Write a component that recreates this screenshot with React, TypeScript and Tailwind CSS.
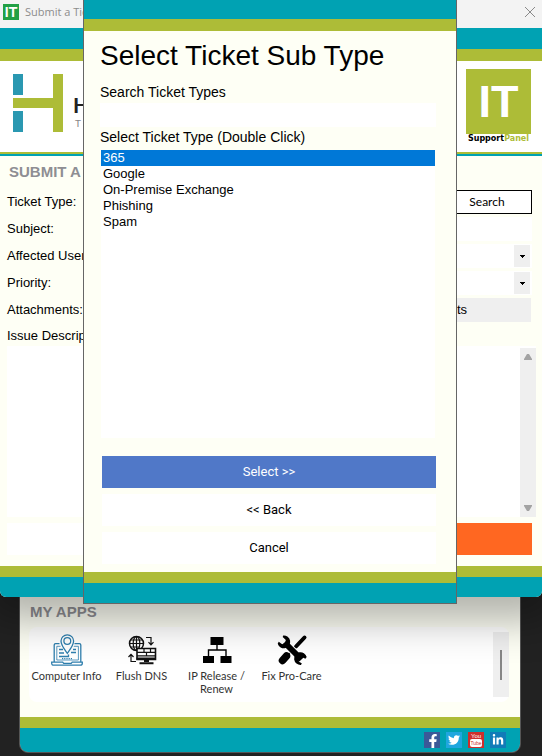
import { useState } from 'react';
import type { ReactNode } from 'react';
import { FaFacebookF, FaLinkedinIn, FaTwitter } from 'react-icons/fa';

const TICKET_TYPES = ['365', 'Google', 'On-Premise Exchange', 'Phishing', 'Spam'];

function ComputerInfoIcon() {
  return (
    <svg viewBox="0 0 32 32" className="size-8" fill="none" stroke="#2f7fae" strokeWidth="1.3">
      <path d="M8.5 9.7H4.6Q3.2 9.7 3.2 11v17M23.5 9.7h4.9q1.4 0 1.4 1.3v17" />
      <path d="M9.5 12.3H5.8V26h21.6V12.3h-4.6" strokeWidth=".8" />
      <path d="M16.3 19.3c-3-4-6.3-8-6.3-12.2a6.3 6.3 0 0 1 12.6 0c0 4.2-3.3 8.2-6.3 12.2z" />
      <circle cx="16.3" cy="7" r="3.4" />
      <path d="M8 15.5h4M8 19h5M8 22.5h9.5v-2M20 18.5h5M22 15.5h3" />
      <path d="M11 24.7h11" strokeDasharray="1.2 1" />
      <path d="M.7 28.2h11l1 1.2h7.5l1-1.2h10.1v1q0 2-2 2H2.7q-2 0-2-2z" />
    </svg>
  );
}

function FlushDnsIcon() {
  return (
    <svg viewBox="0 0 32 32" className="size-8" fill="none" stroke="#111" strokeWidth="1.2">
      <circle cx="10.5" cy="9.5" r="7" strokeWidth="1.5" />
      <ellipse cx="10.5" cy="9.5" rx="3.3" ry="7" />
      <path d="M10.5 2.5v14M3.5 9.5h14M4.5 6h12M4.5 13h9" />
      <path d="M20 3.5h5v7M22.5 8.2l2.5 2.6 2.5-2.6" />
      <path d="M10 27.5H5v-7M2.5 23l2.5-2.6L7.5 23" />
      <path d="M11 14.5h18.5v11H11z" fill="#fff" strokeWidth="1.6" />
      <path d="M11 18.3h18.5M11 21.8h18.5M18 14.5v3.8M20.5 18.3v3.5M24.5 14.5v3.8" />
      <path d="M10.5 24.5h19.5M18 27h5M13.5 29.2h14" strokeWidth="2" />
    </svg>
  );
}

function NetworkIcon() {
  return (
    <svg viewBox="0 0 32 32" className="size-8">
      <path d="M9.5 3h13v8h-13zM2 22h11v7H2zM19.5 22h11v7h-11z" fill="#000" />
      <path d="M16 11v5M7.5 22v-6H25v6" fill="none" stroke="#000" strokeWidth="1.4" />
    </svg>
  );
}

function ToolsIcon() {
  return (
    <svg viewBox="0 0 32 32" className="size-8" fill="none" stroke="#000">
      <path d="M28.5 3.5l-8.5 9" strokeWidth="4" strokeLinecap="round" />
      <path d="M20 12.5l-8 8.5" strokeWidth="2" />
      <path d="M10.5 22l-4 4.500" strokeWidth="7.5" strokeLinecap="round" />
      <path d="M8.5 8.5l17 17" stroke="#fff" strokeWidth="8" />
      <path d="M8.5 8.5l17 17" strokeWidth="6" />
      <path
        d="M7.2 1.500a6.400 6.400 0 1 1-5.500 8.300l1-2 3.500 2.400 3-1 .6-3.200-3.100-3zM25 31a6.400 6.400 0 1 1 5.700-8l-1.300 1.700-3.700-1.700-2.800 1.700v3.100l2.900 1.500z"
        fill="#000"
        stroke="none"
      />
    </svg>
  );
}

function YoutubeIcon() {
  return (
    <svg viewBox="0 0 16 16" className="size-4" fontFamily="Liberation Sans">
      <text x="8" y="6" fontSize="6" fill="#fff" textAnchor="middle">You</text>
      <rect x="2" y="7" width="12" height="8" rx="2" fill="#fff" />
      <text x="8" y="13" fontSize="5" fill="#cd2f2d" textAnchor="middle">Tube</text>
    </svg>
  );
}

const APPS: { name: string; icon: ReactNode }[] = [
  { name: 'Computer Info', icon: <ComputerInfoIcon /> },
  { name: 'Flush DNS', icon: <FlushDnsIcon /> },
  { name: 'IP Release / Renew', icon: <NetworkIcon /> },
  { name: 'Fix Pro-Care', icon: <ToolsIcon /> },
];

function DropDown({ id }: { id: string }) {
  return (
    <div className="relative flex-1 h-6 bg-white">
      <select id={id} className="block w-full h-full appearance-none bg-white outline-none" />
      <span className="absolute right-[2px] inset-y-px w-4 flex items-center justify-center bg-[#efefef] pointer-events-none">
        <svg viewBox="0 0 5 3" className="w-[5px] h-[3px]">
          <path d="M0 0h5v1H4v1H3v1H2V2H1V1H0z" />
        </svg>
      </span>
    </div>
  );
}

function FormRow({ label, id, children }: { label: string; id: string; children: ReactNode }) {
  return (
    <div className="flex items-center h-6 mr-1">
      <label htmlFor={id} className="w-24 shrink-0">{label}</label>
      {children}
    </div>
  );
}

function TicketWindow() {
  return (
    <section className="relative z-10 bg-[#fefff5] rounded-b-md overflow-hidden shadow-[0_8px_40px_16px_rgba(0,0,0,0.3)]">
      <header className="h-7 flex items-center justify-between bg-[#f3f3f3] pl-[3px] pr-[7px]">
        <div className="flex items-center gap-[6px] pb-1">
          <span className="size-4 flex items-center justify-center bg-[#22a045] text-white text-[14px] leading-4 font-bold">
            IT
          </span>
          <span className="font-['Open_Sans',sans-serif] text-[11px] leading-4 text-[#8c8c8c]">Submit a Ticket</span>
        </div>
        <button aria-label="Close" className="pb-1">
          <svg viewBox="0 0 10 10" className="size-[10px]" stroke="#8a8a8a" fill="none">
            <path d="M0 0l10 10M10 0L0 10" />
          </svg>
        </button>
      </header>
      <div className="h-[21px] bg-[#00a2b3]" />
      <div className="h-3 bg-[#adbc37]" />

      <div className="h-[91px] flex justify-between bg-white pl-3 pr-[11px] pt-2">
        <div className="flex gap-[10px]">
          <svg viewBox="0 0 51 58" className="w-[51px] h-[58px] mt-[5px]">
            <path d="M1 0h10v21H1zM1 37h10v21H1z" fill="#2a98b1" />
            <path d="M41 0h10v58H41V34H1V24h40z" fill="#adbc37" />
          </svg>
          <div className="pt-[26px]">
            <p className="font-['Lato',sans-serif] font-bold text-[21px] leading-5 text-[#222]">H</p>
            <p className="font-['Lato',sans-serif] text-[10px] leading-4 text-[#888] pl-[2px]">T</p>
          </div>
        </div>
        <div className="flex flex-col items-center">
          <span className="size-[65px] flex items-center justify-center bg-[#adbc37] text-white text-[45px] leading-none font-bold">
            IT
          </span>
          <p className="font-['DejaVu_Sans',sans-serif] font-bold text-[8px] leading-[10px]">
            Support<span className="text-[#adbc37]">Panel</span>
          </p>
        </div>
      </div>
      <div className="h-[2px] bg-[#adbc37]" />
      <div className="h-[2px] bg-[#00a2b3]" />

      <form className="pl-[7px] pr-[6px] pb-[11px]" onSubmit={(e) => e.preventDefault()}>
        <h2 className="h-[34px] pl-[2px] text-[15px] leading-8 font-bold text-[#8e8e93]">SUBMIT A</h2>
        <div className="flex flex-col gap-[3px]">
          <FormRow label="Ticket Type:" id="type">
            <input id="type" className="flex-1 min-w-0 h-6 bg-white outline-none" />
            <button className="w-[90px] h-6 bg-white border border-black font-['Lato',sans-serif] text-[12px]">
              Search
            </button>
          </FormRow>
          <FormRow label="Subject:" id="subject">
            <input id="subject" className="flex-1 min-w-0 h-6 bg-white outline-none" />
          </FormRow>
          <FormRow label="Affected User:" id="user">
            <DropDown id="user" />
          </FormRow>
          <FormRow label="Priority:" id="priority">
            <DropDown id="priority" />
          </FormRow>
          <FormRow label="Attachments:" id="files">
            <button id="files" type="button" className="w-[200px] h-6 ml-auto mr-px bg-[#efefef]">
              Attachments
            </button>
          </FormRow>
        </div>
        <label htmlFor="issue" className="block pt-1 leading-5">Issue Description:</label>
        <div className="flex h-[171px] bg-white">
          <textarea id="issue" className="flex-1 resize-none bg-white outline-none" />
          <div className="w-4 mt-[2px] py-[6px] flex flex-col items-center justify-between bg-[#efefef]">
            <svg viewBox="0 0 8 6" className="w-2 h-[6px]" fill="#a3a3a3">
              <path d="M3 0h2l3 5v1H0V5z" />
            </svg>
            <svg viewBox="0 0 8 6" className="w-2 h-[6px]" fill="#a3a3a3">
              <path d="M0 0h8v1L5 6H3L0 1z" />
            </svg>
          </div>
        </div>
        <div className="flex mt-[6px] mr-1">
          <button type="button" aria-label="Cancel ticket" className="flex-1 h-8 bg-white" />
          <button aria-label="Submit ticket" className="flex-1 h-8 bg-[#ff6721]" />
        </div>
      </form>
      <div className="h-[11px] bg-[#adbc37]" />
      <div className="h-5 bg-[#00a2b3]" />
    </section>
  );
}

function AppsPanel() {
  return (
    <section className="ml-5 mr-[22px] bg-[#fefff5] rounded-b-lg overflow-hidden outline outline-[#555]">
      <div className="pl-[10px] pr-[11px] pt-1 pb-[15px]">
        <h2 className="text-[15px] leading-[22px] mb-1 font-bold text-[#8e8e93]">MY APPS</h2>
        <div className="flex h-[75px] -ml-px bg-white rounded-lg">
          <ul className="flex flex-1 pt-[7px]">
            {APPS.map((app) => (
              <li key={app.name} className="w-[75px]">
                <button className="w-full flex flex-col items-center gap-[3px] font-['Lato',sans-serif] text-[11px] leading-[13px] text-[#333]">
                  {app.icon}
                  {app.name}
                </button>
              </li>
            ))}
          </ul>
          <div className="w-4 my-[5px] flex items-center justify-center bg-[#efefef]">
            <div className="w-[2px] h-[30px] bg-[#868686]" />
          </div>
        </div>
      </div>
      <div className="h-[11px] bg-[#adbc37]" />
      <footer className="h-6 flex items-center justify-end gap-[6px] pr-[14px] bg-[#00a2b3] text-white">
        <a href="#facebook" aria-label="Facebook" className="size-4 flex items-end justify-end bg-[#3b5998]">
          <FaFacebookF className="size-[14px]" />
        </a>
        <a href="#twitter" aria-label="Twitter" className="size-4 flex items-center justify-center bg-[#1fa6df]">
          <FaTwitter className="size-3" />
        </a>
        <a href="#youtube" aria-label="YouTube" className="size-4 bg-[#cd2f2d]">
          <YoutubeIcon />
        </a>
        <a href="#linkedin" aria-label="LinkedIn" className="size-4 flex items-center justify-center bg-[#117bb8]">
          <FaLinkedinIn className="size-3" />
        </a>
      </footer>
    </section>
  );
}

function SubTypeDialog() {
  const [selected, setSelected] = useState(TICKET_TYPES[0]);

  return (
    <div
      role="dialog"
      aria-labelledby="dialog-title"
      className="absolute z-20 top-0 left-[83px] right-[85px] bg-[#fefff5] border border-t-0 border-[#666]"
    >
      <div className="h-[19px] bg-[#00a2b3]" />
      <div className="h-3 bg-[#adbc37]" />
      <div className="pl-4 pr-5 pt-[7px] pb-2">
        <h1 id="dialog-title" className="text-[28px] leading-9">Select Ticket Sub Type</h1>
        <label htmlFor="search" className="block mt-2 text-[14px] leading-5">Search Ticket Types</label>
        <input id="search" className="block w-full h-6 mt-px bg-white outline-none" />
        <p className="text-[14px] leading-5">Select Ticket Type (Double Click)</p>
        <ul className="h-[288px] mt-[3px] ml-px mr-px bg-white">
          {TICKET_TYPES.map((type) => (
            <li key={type}>
              <button
                onClick={() => setSelected(type)}
                className={`block w-full h-4 pl-[2px] text-left leading-4 ${
                  type === selected ? 'bg-[#0078d7] text-white' : ''
                }`}
              >
                {type}
              </button>
            </li>
          ))}
        </ul>
        <div className="flex flex-col gap-[6px] mt-[18px] pl-[2px] font-['Roboto',sans-serif]">
          <button className="h-8 bg-[#5078c8] text-white">Select &gt;&gt;</button>
          <button className="h-8 bg-white">&lt;&lt; Back</button>
          <button className="h-8 bg-white">Cancel</button>
        </div>
      </div>
      <div className="h-[11px] bg-[#adbc37]" />
      <div className="h-5 bg-[#00a2b3]" />
    </div>
  );
}

export default function App() {
  return (
    <main className="relative min-h-screen bg-[#222] font-['Liberation_Sans',Arial,sans-serif] text-[13px] text-black">
      <TicketWindow />
      <AppsPanel />
      <SubTypeDialog />
    </main>
  );
}
